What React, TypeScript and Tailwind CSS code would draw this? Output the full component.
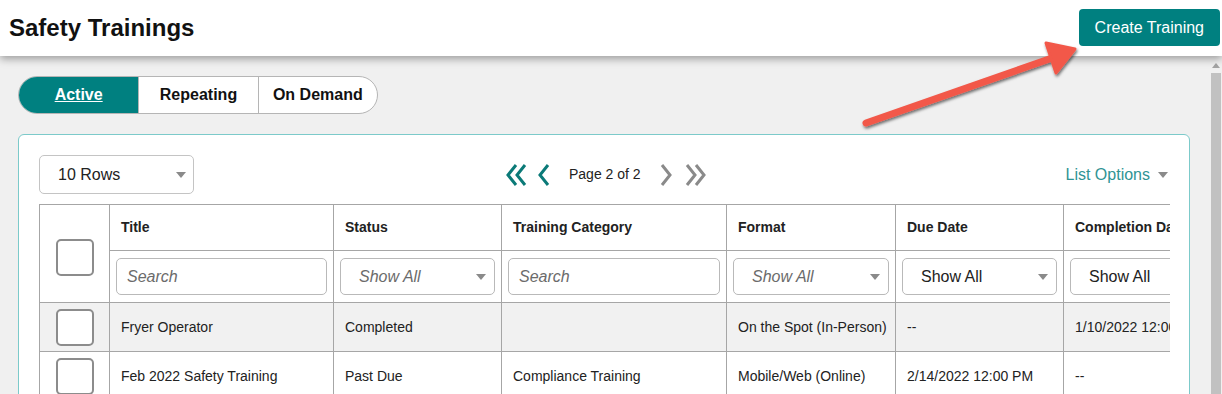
import React from 'react'

const FONT = 'font-[family-name:Liberation_Sans,Arial,sans-serif]'

// ─── columns (widths measured off the table grid) ────────────────────────────
const COLUMNS = [
  { label: 'Title', width: 224, filter: 'search' },
  { label: 'Status', width: 168, filter: 'select-muted' },
  { label: 'Training Category', width: 225, filter: 'search' },
  { label: 'Format', width: 169, filter: 'select-muted' },
  { label: 'Due Date', width: 168, filter: 'select' },
  { label: 'Completion Date', width: 168, filter: 'select' },
] as const

const ROWS = [
  ['Fryer Operator', 'Completed', '', 'On the Spot (In-Person)', '--', '1/10/2022 12:00 PM'],
  ['Feb 2022 Safety Training', 'Past Due', 'Compliance Training', 'Mobile/Web (Online)', '2/14/2022 12:00 PM', '--'],
]

function Caret({ className = '' }: { className?: string }) {
  return (
    <svg width="10" height="6" viewBox="0 0 10 6" className={className}>
      <path d="M0 0h10L5 6z" fill="#8a8a8a" />
    </svg>
  )
}

function Checkbox() {
  return <div className="w-[38px] h-[37px] rounded-[5px] border-2 border-[#8c8c8c] bg-white" />
}

function Chevrons({ color, dir, double }: { color: string; dir: 'l' | 'r'; double?: boolean }) {
  const w = double ? 24 : 14
  const pts = (x: number) => (dir === 'l' ? `${x + 9},2 ${x + 1},12 ${x + 9},22` : `${x + 1},2 ${x + 9},12 ${x + 1},22`)
  return (
    <svg width={w} height="24" viewBox={`0 0 ${w} 24`}>
      <polyline points={pts(2)} fill="none" stroke={color} strokeWidth="3" strokeLinejoin="miter" />
      {double && <polyline points={pts(11)} fill="none" stroke={color} strokeWidth="3" strokeLinejoin="miter" />}
    </svg>
  )
}

function Filter({ kind }: { kind: string }) {
  if (kind === 'search') {
    return (
      <div className="h-[37px] rounded-[5px] border border-[#b9b9b9] bg-white flex items-center px-[10px] text-[16px] italic text-[#6b6b6b]">
        Search
      </div>
    )
  }
  const muted = kind === 'select-muted'
  return (
    <div className="h-[37px] rounded-[5px] border border-[#b9b9b9] bg-white flex items-center justify-between pl-[18px] pr-[8px]">
      <span className={muted ? 'text-[16px] italic text-[#6b6b6b]' : 'text-[16px] text-[#222]'}>Show All</span>
      <Caret />
    </div>
  )
}

export default function App() {
  return (
    <div className={`${FONT} relative w-[1222px] h-[394px] overflow-hidden bg-[#f0f0f0]`}>
      {/* ── Header ─────────────────────────────────────────────────────────── */}
      <header className="relative z-10 h-[56px] bg-white flex items-center justify-between pl-[9px] pr-[2px] shadow-[0_3px_8px_rgba(0,0,0,0.35)]">
        <h1 className="text-[24px] font-bold text-[#111] m-0">Safety Trainings</h1>
        <button className="h-[37px] px-[16px] rounded-[4px] bg-[#008080] text-white text-[16px] mb-[1px]">
          Create Training
        </button>
      </header>

      <div className="flex h-[338px]">
        <main className="flex-1 pl-[18px] pr-[20px] pt-[20px]">
          {/* ── Tabs ─────────────────────────────────────────────────────────── */}
          <div className="flex w-[360px] h-[38px] rounded-full border border-[#b5b5b5] overflow-hidden bg-white">
            <div className="w-[120px] flex items-center justify-center bg-[#008080] text-white font-bold text-[16px] underline">Active</div>
            <div className="w-[120px] flex items-center justify-center border-l border-[#b5b5b5] font-bold text-[16px] text-[#111]">Repeating</div>
            <div className="w-[120px] flex items-center justify-center border-l border-[#b5b5b5] font-bold text-[16px] text-[#111]">On Demand</div>
          </div>

          {/* ── Card ─────────────────────────────────────────────────────────── */}
          <section className="mt-[20px] h-[300px] rounded-[6px] border border-[#7ccaca] bg-white pt-[20px] pl-[20px] pr-[19px]">
            <div className="flex items-center h-[39px]">
              <div className="w-[155px] h-[39px] rounded-[5px] border border-[#c4c4c4] flex items-center justify-between pl-[18px] pr-[7px] text-[16px] text-[#222]">
                10 Rows
                <Caret />
              </div>
              <div className="flex items-center ml-[311px] gap-[4px]">
                <Chevrons color="#0b7a78" dir="l" double />
                <span className="ml-[4px]"><Chevrons color="#0b7a78" dir="l" /></span>
                <span className="mx-[14px] text-[14px] text-[#222]">Page 2 of 2</span>
                <Chevrons color="#8a8a8a" dir="r" />
                <span className="ml-[7px]"><Chevrons color="#8a8a8a" dir="r" double /></span>
              </div>
              <div className="ml-auto flex items-center gap-[8px] pr-[2px] text-[16px] text-[#2f9494]">
                List Options
                <Caret />
              </div>
            </div>

            {/* ── Table ──────────────────────────────────────────────────────── */}
            <div className="mt-[10px] w-[1131px] overflow-hidden">
              <table className="border-collapse table-fixed w-[1192px] text-[14px] text-[#222]">
                <colgroup>
                  <col className="w-[70px]" />
                  {COLUMNS.map(c => (
                    <col key={c.label} style={{ width: c.width }} />
                  ))}
                </colgroup>
                <thead>
                  <tr className="h-[46px]">
                    <th rowSpan={2} className="border border-[#a6a6a6] align-middle">
                      <div className="flex justify-center pt-[8px]"><Checkbox /></div>
                    </th>
                    {COLUMNS.map(c => (
                      <th key={c.label} className="border border-[#a6a6a6] text-left font-bold pl-[11px] whitespace-nowrap overflow-hidden">
                        {c.label}
                      </th>
                    ))}
                  </tr>
                  <tr className="h-[52px]">
                    {COLUMNS.map(c => (
                      <th key={c.label} className="border border-[#a6a6a6] font-normal px-[6px]">
                        <Filter kind={c.filter} />
                      </th>
                    ))}
                  </tr>
                </thead>
                <tbody>
                  {ROWS.map((row, i) => (
                    <tr key={i} className={i === 0 ? 'h-[49px] bg-[#f1f1f1]' : 'h-[49px] bg-white'}>
                      <td className="border border-[#a6a6a6]">
                        <div className="flex justify-center"><Checkbox /></div>
                      </td>
                      {row.map((cell, j) => (
                        <td key={j} className="border border-[#a6a6a6] pl-[11px] whitespace-nowrap overflow-hidden">
                          {cell}
                        </td>
                      ))}
                    </tr>
                  ))}
                </tbody>
              </table>
            </div>
          </section>
        </main>

        {/* ── Scrollbar ──────────────────────────────────────────────────────── */}
        <div className="w-[12px] bg-[#f0f0f0] flex flex-col items-center">
          <svg width="8" height="5" viewBox="0 0 8 5" className="mt-[7px]">
            <path d="M0 5h8L4 0z" fill="#a3a3a3" />
          </svg>
          <div className="mt-[5px] w-[10px] flex-1 bg-[#c1c1c1]" />
        </div>
      </div>

      {/* ── Callout arrow ───────────────────────────────────────────────────── */}
      <svg className="absolute left-[850px] top-[35px] z-20 pointer-events-none" width="240" height="110" viewBox="0 0 240 110">
        <defs>
          <filter id="sh" x="-20%" y="-20%" width="140%" height="140%">
            <feDropShadow dx="1" dy="2" stdDeviation="1.5" floodColor="#000" floodOpacity="0.55" />
          </filter>
        </defs>
        <g filter="url(#sh)">
          <line x1="16" y1="88" x2="205" y2="22" stroke="#f2584a" strokeWidth="7" strokeLinecap="round" />
          <path d="M225 14 L196 8 L206 38 Z" fill="#f2584a" stroke="#f2584a" strokeWidth="3" strokeLinejoin="round" />
        </g>
      </svg>
    </div>
  )
}
